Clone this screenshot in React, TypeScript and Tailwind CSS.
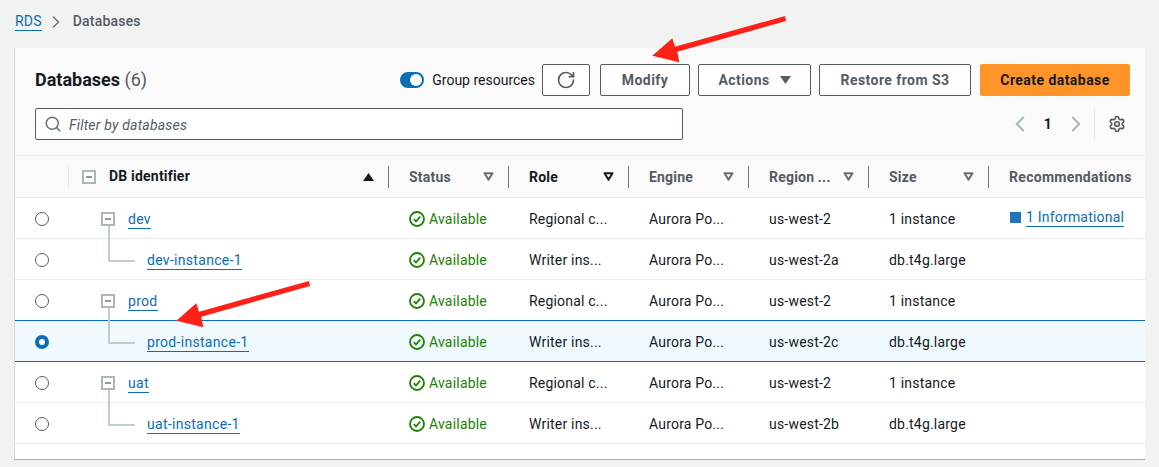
// ABOUTME: RDS databases list with grouped resources
// ABOUTME: Static table with toolbar, filter, pager and annotation arrows

import { ChevronLeft, ChevronRight, RotateCw, Search, Settings } from 'lucide-react'

interface DbRow {
  name: string
  child: boolean
  role: string
  region: string
  size: string
  selected?: boolean
  recommendation?: string
}

const rows: DbRow[] = [
  { name: 'dev', child: false, role: 'Regional c...', region: 'us-west-2', size: '1 instance', recommendation: '1 Informational' },
  { name: 'dev-instance-1', child: true, role: 'Writer ins...', region: 'us-west-2a', size: 'db.t4g.large' },
  { name: 'prod', child: false, role: 'Regional c...', region: 'us-west-2', size: '1 instance' },
  { name: 'prod-instance-1', child: true, role: 'Writer ins...', region: 'us-west-2c', size: 'db.t4g.large', selected: true },
  { name: 'uat', child: false, role: 'Regional c...', region: 'us-west-2', size: '1 instance' },
  { name: 'uat-instance-1', child: true, role: 'Writer ins...', region: 'us-west-2b', size: 'db.t4g.large' },
]

const columns = [
  { label: 'Status', dark: false },
  { label: 'Role', dark: true },
  { label: 'Engine', dark: false },
  { label: 'Region ...', dark: false },
  { label: 'Size', dark: false },
]

function SortDown({ dark }: { dark: boolean }) {
  return (
    <svg width="11" height="9" viewBox="0 0 11 9" className={dark ? 'text-[#16191f]' : 'text-[#687078]'}>
      <path d="M1.5 1.2h8L5.5 7.6z" fill="none" stroke="currentColor" strokeWidth="2" strokeLinejoin="round" />
    </svg>
  )
}

function MinusBox() {
  return (
    <span className="flex h-[14px] w-[14px] shrink-0 items-center justify-center border-2 border-[#aab7b8] bg-white">
      <span className="h-[2px] w-[6px] bg-[#8d9a9b]" />
    </span>
  )
}

function AvailableIcon() {
  return (
    <svg width="16" height="16" viewBox="0 0 16 16" fill="none" stroke="#1d8102" strokeWidth="1.8">
      <circle cx="8" cy="8" r="7" />
      <path d="M4.8 8.2l2.2 2.3 4.2-4.8" />
    </svg>
  )
}

function Arrow({ className }: { className: string }) {
  return (
    <svg width="136" height="48" viewBox="0 0 136 48" className={`pointer-events-none absolute ${className}`}>
      <path d="M.3 40.7L20.3 23.3 23 31.7 133 1l1 5L25.3 36.7l2 10.6z" fill="#ff2117" />
    </svg>
  )
}

function TableRow({ row }: { row: DbRow }) {
  const tone = row.selected
    ? 'border-y border-[#0a6eb4] bg-[#f0f9ff] -mt-px h-[42px] relative z-10'
    : 'border-b border-[#eaeded] h-[41px]'
  return (
    <div className={`grid grid-cols-[54px_320px_120px_120px_120px_120px_120px_1fr] items-center pt-[2px] text-[14px] text-[#16191f] ${tone}`}>
      <div className="flex justify-center">
        {row.selected ? (
          <span className="flex h-[14px] w-[14px] items-center justify-center rounded-full bg-[#0a6eb4]">
            <span className="h-[6px] w-[6px] rounded-full bg-white" />
          </span>
        ) : (
          <span className="h-[14px] w-[14px] rounded-full border border-[#545b64] bg-white" />
        )}
      </div>
      <div className="relative flex h-full items-center">
        {row.child ? (
          <>
            <span className="absolute bottom-1/2 left-[39px] h-[34px] w-[2px] bg-[#c3cccc]" />
            <span className="absolute left-[39px] top-1/2 h-[2px] w-[27px] bg-[#c3cccc]" />
            <a className="ml-[78px] border-b border-[#0a6eb4] leading-[18px] tracking-[0.3px] text-[#0a6eb4]">{row.name}</a>
          </>
        ) : (
          <>
            <span className="ml-[32px]"><MinusBox /></span>
            <a className="ml-[13px] border-b border-[#0a6eb4] leading-[18px] tracking-[0.3px] text-[#0a6eb4]">{row.name}</a>
          </>
        )}
      </div>
      <div className="flex items-center gap-[4px] pl-[20px] text-[#1d8102]">
        <AvailableIcon />
        <span>Available</span>
      </div>
      <div className="pl-[20px]">{row.role}</div>
      <div className="pl-[20px]">Aurora Po...</div>
      <div className="pl-[20px]">{row.region}</div>
      <div className="pl-[20px]">{row.size}</div>
      <div className="pl-[20px]">
        {row.recommendation && (
          <span className="-mt-[3px] flex items-center gap-[5px] pl-px">
            <span className="h-[11px] w-[11px] bg-[#2272b4]" />
            <a className="border-b border-[#0a6eb4] leading-[18px] text-[#0a6eb4]">{row.recommendation}</a>
          </span>
        )}
      </div>
    </div>
  )
}

export default function App() {
  return (
    <div className="relative h-[467px] w-[1159px] overflow-hidden bg-[#f1f3f3] font-['Roboto',sans-serif] tracking-[0.2px]">
      <nav className="flex h-[48px] items-start pl-[15px] pt-[12px] text-[14px] leading-[18px]">
        <a className="border-b border-[#0a6eb4] text-[#0a6eb4]">RDS</a>
        <ChevronRight size={20} strokeWidth={1.6} className="ml-[4px] text-[#687078]" />
        <span className="ml-[7px] font-medium text-[#545b64]">Databases</span>
      </nav>

      <section className="ml-[14px] h-[411px] w-[1131px] border-l border-[#d5dbdb] bg-white shadow-[0_1px_0_#a3aeae]">
        <header className="h-[108px] border-b border-[#eaeded] bg-[#fafafa] pl-[20px] pr-[15px] pt-[16px]">
          <div className="flex h-[32px] items-center">
            <h1 className="-mt-px text-[18px] font-bold tracking-normal text-[#16191f]">
              Databases <span className="font-normal text-[#545b64]">(6)</span>
            </h1>
            <div className="ml-auto mr-[7px] flex items-center gap-[8px]">
              <span className="flex h-[16px] w-[24px] items-center justify-end rounded-full bg-[#0a6eb4] pr-[2px]">
                <span className="h-[12px] w-[12px] rounded-full bg-white" />
              </span>
              <span className="text-[14px] tracking-normal text-[#16191f]">Group resources</span>
            </div>
            <button className="flex h-[32px] w-[48px] items-center justify-center rounded-[2px] border border-[#545b64] bg-white text-[#545b64]">
              <RotateCw size={20} strokeWidth={2} />
            </button>
            <button className="ml-[10px] h-[32px] w-[90px] rounded-[2px] border border-[#545b64] bg-white text-[14px] font-bold tracking-[0.45px] text-[#545b64]">Modify</button>
            <button className="ml-[8px] flex h-[32px] w-[113px] items-center justify-center gap-[10px] rounded-[2px] border border-[#545b64] bg-white text-[14px] font-bold tracking-[0.45px] text-[#545b64]">
              Actions
              <svg width="11" height="8" viewBox="0 0 11 8"><path d="M0 0h11L5.5 8z" fill="#545b64" /></svg>
            </button>
            <button className="ml-[8px] h-[32px] w-[152px] rounded-[2px] border border-[#545b64] bg-white text-[14px] font-bold tracking-[0.45px] text-[#545b64]">Restore from S3</button>
            <button className="ml-[9px] h-[32px] w-[150px] rounded-[2px] bg-[#ff9428] text-[14px] font-bold tracking-[0.45px] text-[#16191f]">Create database</button>
          </div>
          <div className="mt-[12px] flex h-[32px] items-center">
            <div className="flex h-[32px] w-[648px] items-center gap-[7px] rounded-[2px] border border-[#545b64] bg-white pl-[8px]">
              <Search size={18} strokeWidth={2} className="text-[#687078]" />
              <span className="pt-[2px] text-[14px] italic text-[#545b64]">Filter by databases</span>
            </div>
            <div className="ml-auto flex h-[32px] items-center">
              <ChevronLeft size={26} strokeWidth={1.8} className="text-[#aab7b8]" />
              <span className="ml-[11px] text-[14px] font-bold text-[#16191f]">1</span>
              <ChevronRight size={26} strokeWidth={1.8} className="ml-[11px] text-[#aab7b8]" />
              <span className="ml-[5px] h-[32px] w-px bg-[#eaeded]" />
              <Settings size={18} strokeWidth={2.2} className="ml-[13px] mr-[4px] text-[#545b64]" />
            </div>
          </div>
        </header>

        <div className="grid h-[42px] grid-cols-[54px_320px_120px_120px_120px_120px_120px_1fr] items-center border-b border-[#eaeded] bg-[#fafafa] text-[14px] font-bold text-[#545b64]">
          <div className="flex h-[22px] justify-end"><span className="w-px bg-[#eaeded]" /></div>
          <div className="flex h-[22px] items-center gap-[13px] border-r border-[#687078] pl-[13px] pr-[14px] text-[#16191f]">
            <MinusBox />
            <span>DB identifier</span>
            <svg width="11" height="8" viewBox="0 0 11 8" className="ml-auto"><path d="M5.5 0L11 8H0z" fill="#16191f" /></svg>
          </div>
          {columns.map((col) => (
            <div key={col.label} className="flex h-[22px] items-center justify-between border-r border-[#687078] pl-[20px] pr-[14px]">
              <span className={col.dark ? 'pt-[2px] text-[#16191f]' : 'pt-[2px]'}>{col.label}</span>
              <SortDown dark={col.dark} />
            </div>
          ))}
          <div className="pl-[20px] pt-[2px] tracking-[0.3px]">Recommendations</div>
        </div>

        {rows.map((row) => (
          <TableRow key={row.name} row={row} />
        ))}
      </section>

      <Arrow className="left-[652px] top-[15px]" />
      <Arrow className="left-[176px] top-[280px] z-20" />
    </div>
  )
}
